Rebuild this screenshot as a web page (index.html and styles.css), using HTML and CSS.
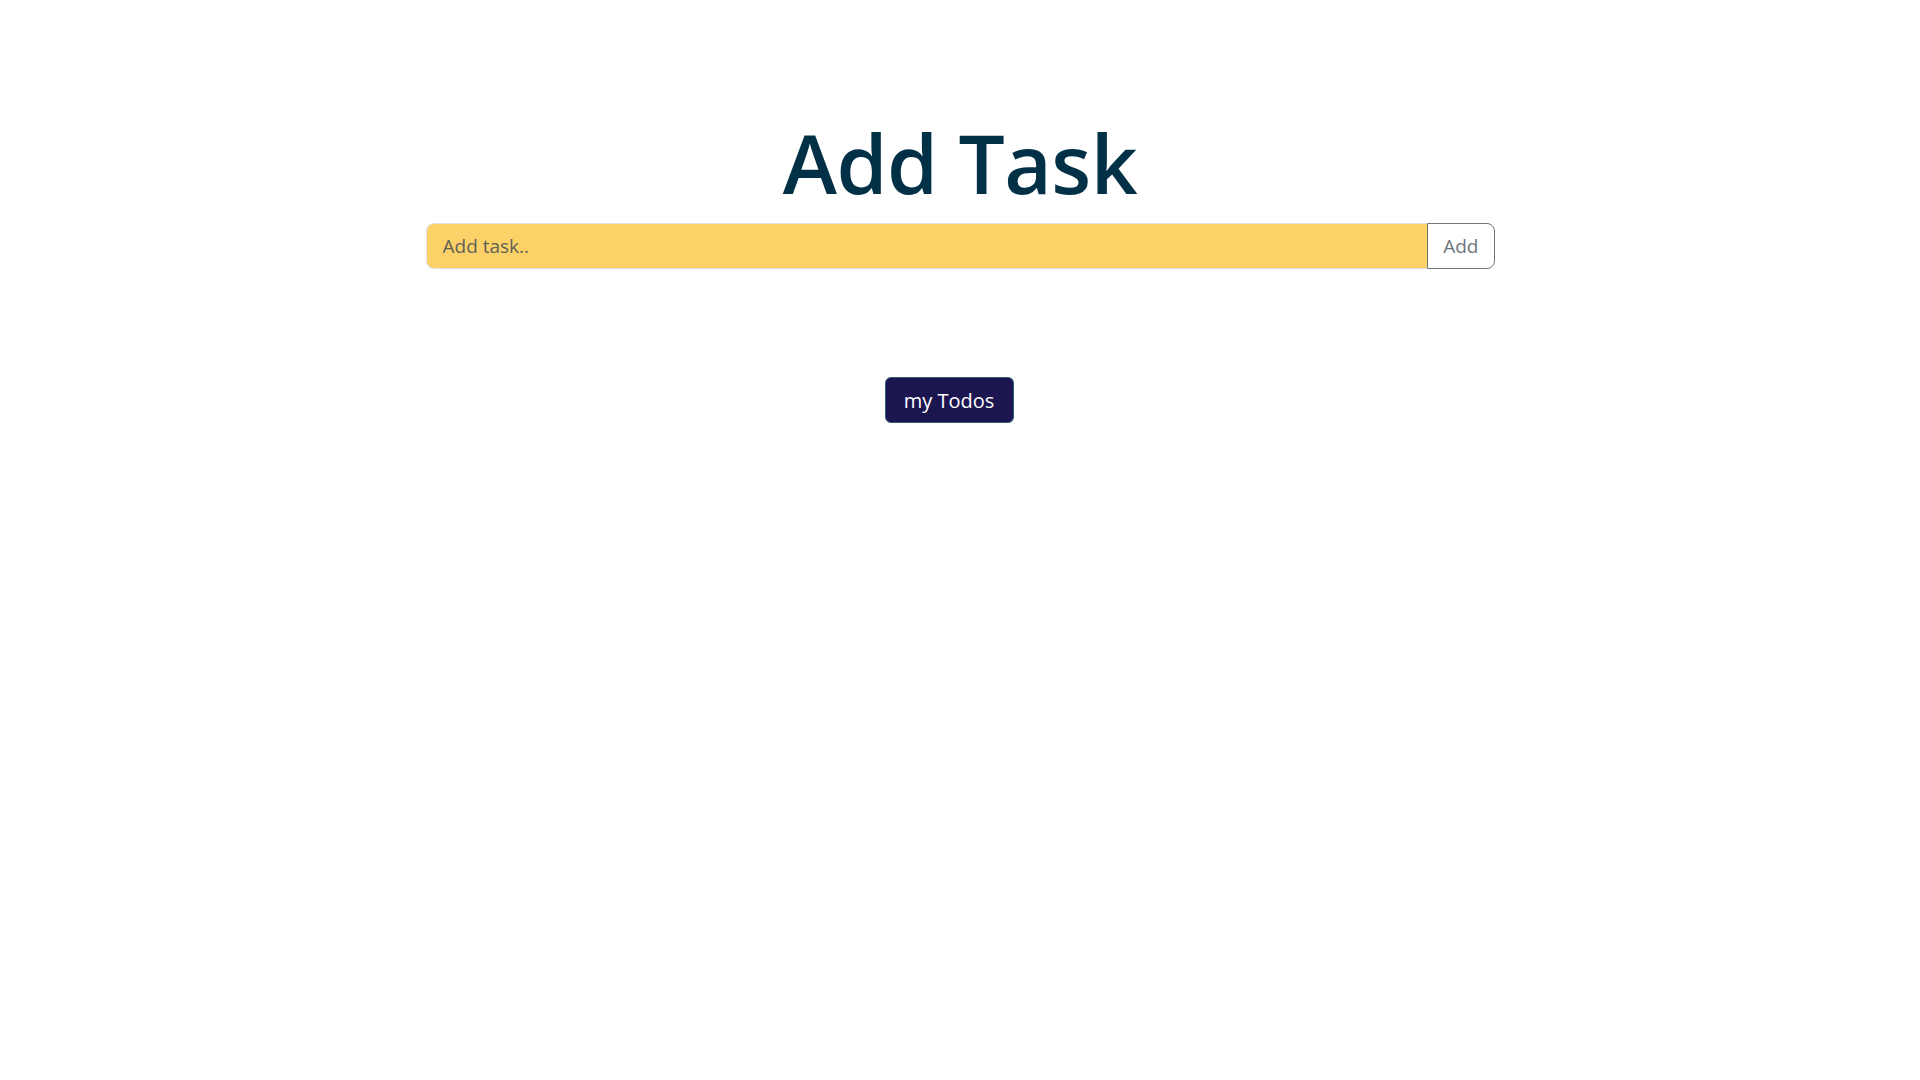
FILE: index.html
```html
<!DOCTYPE html>
<html lang="en">
<head>
<meta charset="utf-8">
<title>Add Task</title>
<link rel="stylesheet" href="styles.css">
</head>
<body>
<main class="page">
  <h1 class="title">Add Task</h1>
  <form class="input-group">
    <input class="task-input" type="text" placeholder="Add task..">
    <button class="add-btn" type="button">Add</button>
  </form>
  <button class="todos-btn" type="button">my Todos</button>
</main>
</body>
</html>
```
FILE: styles.css
```css
* { box-sizing: border-box; }
html, body { margin: 0; padding: 0; background: #fff; }
body {
  font-family: "Open Sans", "Noto Sans", "Liberation Sans", sans-serif;
  color: #212529;
}
.page {
  display: flex;
  flex-direction: column;
  align-items: center;
  padding-top: 113px;
}
.title {
  margin: 0;
  font-size: 82px;
  font-weight: 600;
  line-height: 1.2;
  color: #023047;
  letter-spacing: -0.5px;
}
.input-group {
  display: flex;
  width: 1069px;
  height: 46px;
  margin-top: 12px;
}
.task-input {
  flex: 1;
  height: 100%;
  background: #fcd167;
  border: 1px solid #dee2e6;
  border-right: none;
  border-radius: 8px 0 0 8px;
  padding: 0 16px;
  font-family: inherit;
  font-size: 19px;
  color: #212529;
  outline: none;
}
.task-input::placeholder { color: #5f6157; }
.add-btn {
  height: 100%;
  background: #fff;
  border: 1px solid #6c757d;
  border-radius: 0 8px 8px 0;
  padding: 0 15px;
  font-family: inherit;
  font-size: 19px;
  color: #6c757d;
}
.todos-btn {
  margin-top: 108px;
  margin-right: 22px;
  width: 129px;
  height: 46px;
  background: #1b1650;
  border: 1px solid #2d6275;
  border-radius: 6px;
  color: #fff;
  font-family: inherit;
  font-size: 20px;
  padding: 0;
}
```
